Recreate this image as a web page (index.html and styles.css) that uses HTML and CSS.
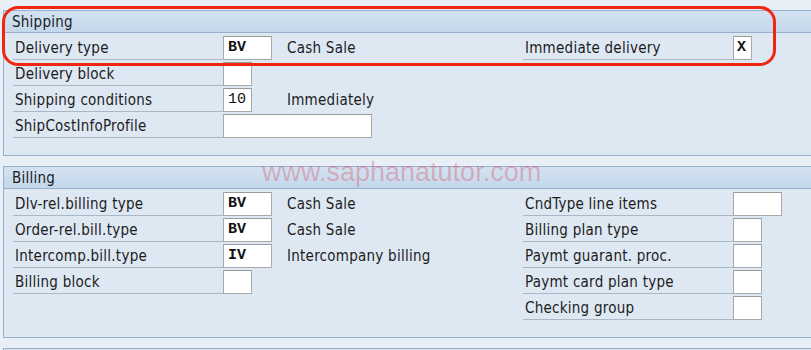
FILE: index.html
```html
<!DOCTYPE html>
<html lang="en">

<head>
    <meta charset="UTF-8">
    <title>Sales document type - Shipping / Billing</title>
    <link rel="stylesheet" href="styles.css">
</head>

<body>
    <div class="page">

        <!-- Shipping -->
        <div class="group">
            <div class="group-title">Shipping</div>
            <div class="fields">
                <div class="lbl">Delivery type</div>
                <div class="cell"><span class="inp w48">BV</span></div>
                <div class="desc">Cash Sale</div>
                <div class="lbl">Immediate delivery</div>
                <div class="cell"><span class="inp w19 chk">X</span></div>

                <div class="lbl">Delivery block</div>
                <div class="cell"><span class="inp w29"></span></div>
                <div class="desc"></div>
                <div class="blank"></div>
                <div class="blank"></div>

                <div class="lbl">Shipping conditions</div>
                <div class="cell"><span class="inp w29 thin">10</span></div>
                <div class="desc">Immediately</div>
                <div class="blank"></div>
                <div class="blank"></div>

                <div class="lbl">ShipCostInfoProfile</div>
                <div class="cell wide"><span class="inp w149"></span></div>
                <div class="blank"></div>
                <div class="blank"></div>
            </div>
        </div>

        <!-- Billing -->
        <div class="group">
            <div class="group-title">Billing</div>
            <div class="fields">
                <div class="lbl">Dlv-rel.billing type</div>
                <div class="cell"><span class="inp w48">BV</span></div>
                <div class="desc">Cash Sale</div>
                <div class="lbl">CndType line items</div>
                <div class="cell"><span class="inp w48"></span></div>

                <div class="lbl">Order-rel.bill.type</div>
                <div class="cell"><span class="inp w48">BV</span></div>
                <div class="desc">Cash Sale</div>
                <div class="lbl">Billing plan type</div>
                <div class="cell"><span class="inp w29"></span></div>

                <div class="lbl">Intercomp.bill.type</div>
                <div class="cell"><span class="inp w48">IV</span></div>
                <div class="desc">Intercompany billing</div>
                <div class="lbl">Paymt guarant. proc.</div>
                <div class="cell"><span class="inp w29"></span></div>

                <div class="lbl">Billing block</div>
                <div class="cell"><span class="inp w29"></span></div>
                <div class="desc"></div>
                <div class="lbl">Paymt card plan type</div>
                <div class="cell"><span class="inp w29"></span></div>

                <div class="blank"></div>
                <div class="blank"></div>
                <div class="blank"></div>
                <div class="lbl">Checking group</div>
                <div class="cell"><span class="inp w29"></span></div>
            </div>
        </div>

        <!-- next group, cut off -->
        <div class="group">
            <div class="group-title">&nbsp;</div>
        </div>
    </div>

    <!-- annotation + watermark on top of the screen -->
    <div class="mark"></div>
    <div class="watermark">www.saphanatutor.com</div>
</body>

</html>
```

FILE: styles.css
```css
/* SAP GUI look */

html,
body {
    margin: 0;
    padding: 0;
    overflow: hidden;
}

body {
    font-family: 'DejaVu Sans Condensed', 'DejaVu Sans', Tahoma, sans-serif;
    font-stretch: condensed;
    font-size: 15px;
    letter-spacing: 0.25px;
    color: #1c1c1c;
    background-color: #e9eff6;
    position: relative;
    width: 811px;
    height: 350px;
}

.page {
    padding: 10px 0 0 3px;
}

.group {
    border: 1px solid #98b0cb;
    border-right: none;
    background-color: #dee8f3;
    margin-bottom: 10px;
}

.group-title {
    height: 21px;
    line-height: 23px;
    padding-left: 8px;
    background: linear-gradient(to bottom, #d3e2f1, #c3d7eb);
    border-bottom: 1px solid #98b0cb;
}

.fields {
    display: grid;
    grid-template-columns: 210px 64px 236px 210px 1fr;
    grid-auto-rows: 26px;
    padding: 1px 0 17px 9px;
}

.lbl {
    padding: 3px 0 0 2px;
    line-height: 22px;
    border-bottom: 1px solid #a9b7c6;
    white-space: nowrap;
}

.desc {
    padding-top: 3px;
    line-height: 22px;
    white-space: nowrap;
}

.cell {
    padding-top: 2px;
}

.cell.wide {
    grid-column: span 2;
}

.inp {
    display: block;
    box-sizing: border-box;
    height: 24px;
    background-color: #fff;
    border: 1px solid #a9a9a9;
    border-top-color: #9a9a9a;
    font-family: 'Liberation Mono', 'Courier New', monospace;
    font-stretch: normal;
    font-weight: bold;
    font-size: 15px;
    letter-spacing: 0;
    line-height: 22px;
    padding-left: 4px;
    color: #111;
}

.inp.thin {
    font-weight: normal;
}

.inp.chk {
    padding-left: 3px;
}

.w19 {
    width: 19px;
}

.w29 {
    width: 29px;
}

.w48 {
    width: 49px;
}

.w149 {
    width: 149px;
}

/* red highlight drawn over the screen */
.mark {
    position: absolute;
    left: 2px;
    top: 6px;
    width: 768px;
    height: 54px;
    border: 3px solid #f0260f;
    border-radius: 16px;
}

.watermark {
    position: absolute;
    left: 262px;
    top: 159px;
    font-family: 'Liberation Sans', Arial, sans-serif;
    font-stretch: normal;
    font-size: 27px;
    letter-spacing: 0;
    line-height: 27px;
    color: rgba(215, 60, 80, 0.33);
    white-space: nowrap;
}
```
